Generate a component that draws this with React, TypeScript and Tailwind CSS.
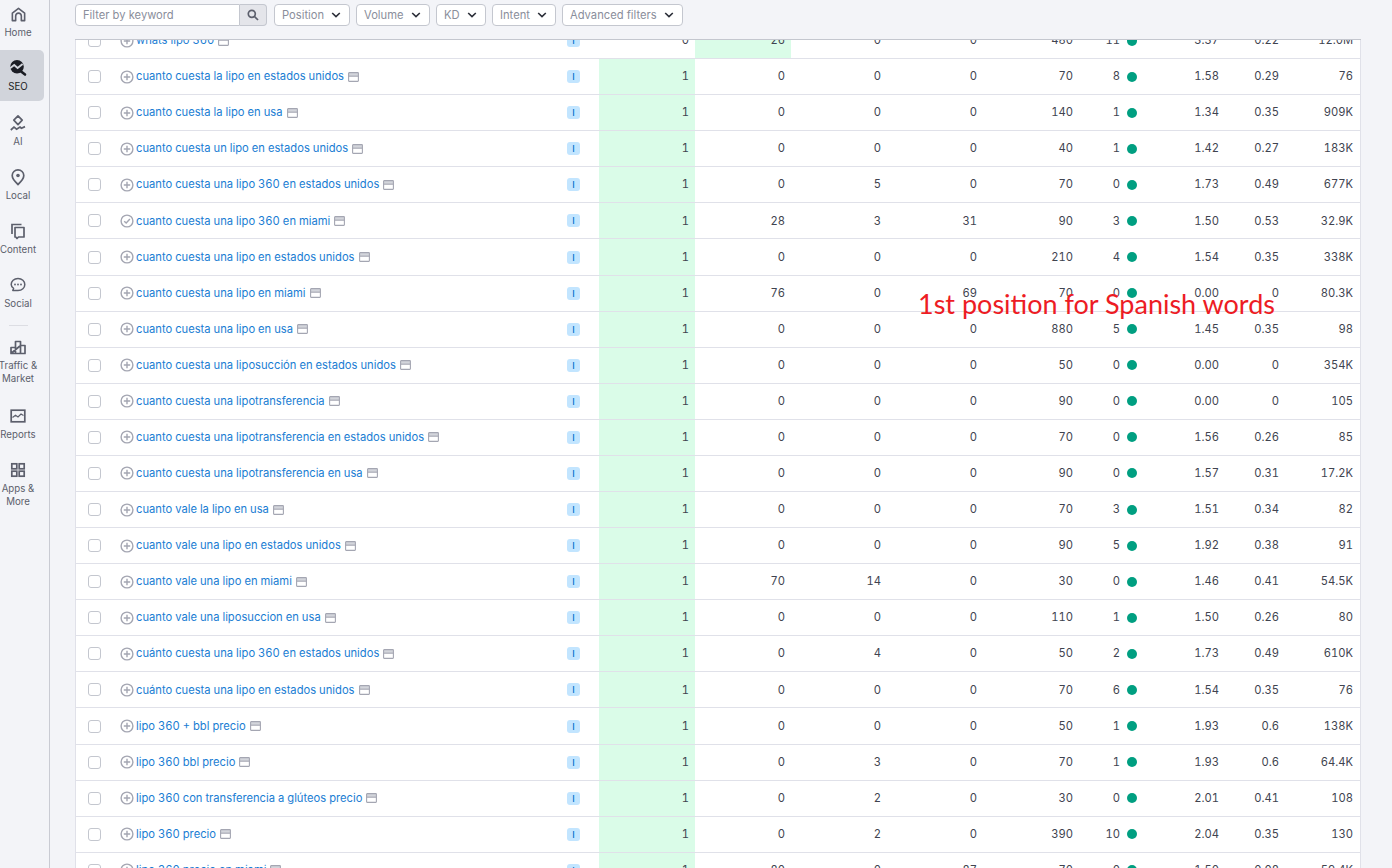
import React from "react";

type Row = [string, string, string, string, string, string, string, string, string, string, string?];
const rows: Row[] = [
  ["whats lipo 360", "0", "26", "0", "0", "480", "11", "3.37", "0.22", "12.0M"],
  ["cuanto cuesta la lipo en estados unidos", "1", "0", "0", "0", "70", "8", "1.58", "0.29", "76"],
  ["cuanto cuesta la lipo en usa", "1", "0", "0", "0", "140", "1", "1.34", "0.35", "909K"],
  ["cuanto cuesta un lipo en estados unidos", "1", "0", "0", "0", "40", "1", "1.42", "0.27", "183K"],
  ["cuanto cuesta una lipo 360 en estados unidos", "1", "0", "5", "0", "70", "0", "1.73", "0.49", "677K"],
  ["cuanto cuesta una lipo 360 en miami", "1", "28", "3", "31", "90", "3", "1.50", "0.53", "32.9K", "check"],
  ["cuanto cuesta una lipo en estados unidos", "1", "0", "0", "0", "210", "4", "1.54", "0.35", "338K"],
  ["cuanto cuesta una lipo en miami", "1", "76", "0", "69", "70", "0", "0.00", "0", "80.3K"],
  ["cuanto cuesta una lipo en usa", "1", "0", "0", "0", "880", "5", "1.45", "0.35", "98"],
  ["cuanto cuesta una liposucción en estados unidos", "1", "0", "0", "0", "50", "0", "0.00", "0", "354K"],
  ["cuanto cuesta una lipotransferencia", "1", "0", "0", "0", "90", "0", "0.00", "0", "105"],
  ["cuanto cuesta una lipotransferencia en estados unidos", "1", "0", "0", "0", "70", "0", "1.56", "0.26", "85"],
  ["cuanto cuesta una lipotransferencia en usa", "1", "0", "0", "0", "90", "0", "1.57", "0.31", "17.2K"],
  ["cuanto vale la lipo en usa", "1", "0", "0", "0", "70", "3", "1.51", "0.34", "82"],
  ["cuanto vale una lipo en estados unidos", "1", "0", "0", "0", "90", "5", "1.92", "0.38", "91"],
  ["cuanto vale una lipo en miami", "1", "70", "14", "0", "30", "0", "1.46", "0.41", "54.5K"],
  ["cuanto vale una liposuccion en usa", "1", "0", "0", "0", "110", "1", "1.50", "0.26", "80"],
  ["cuánto cuesta una lipo 360 en estados unidos", "1", "0", "4", "0", "50", "2", "1.73", "0.49", "610K"],
  ["cuánto cuesta una lipo en estados unidos", "1", "0", "0", "0", "70", "6", "1.54", "0.35", "76"],
  ["lipo 360 + bbl precio", "1", "0", "0", "0", "50", "1", "1.93", "0.6", "138K"],
  ["lipo 360 bbl precio", "1", "0", "3", "0", "70", "1", "1.93", "0.6", "64.4K"],
  ["lipo 360 con transferencia a glúteos precio", "1", "0", "2", "0", "30", "0", "2.01", "0.41", "108"],
  ["lipo 360 precio", "1", "0", "2", "0", "390", "10", "2.04", "0.35", "130"],
  ["lipo 360 precio en miami", "1", "80", "0", "87", "70", "0", "1.50", "0.08", "59.4K"],
];

function KeywordIcon({ check }: { check: boolean }) {
  return (
    <svg width="14" height="14" viewBox="0 0 14 14" fill="none" stroke="#a4a6b2" strokeWidth="1.4" className="shrink-0">
      <circle cx="7" cy="7" r="5.9" />
      {check ? <path d="M4.2 7.2 6.2 9.1 9.9 5.1" /> : <path d="M7 3.8v6.4M3.8 7h6.4" />}
    </svg>
  );
}

function SerpIcon() {
  return (
    <svg width="11" height="10" viewBox="0 0 11 10" fill="none" stroke="#a4a6b2" strokeWidth="1.1" className="shrink-0">
      <rect x="1" y="1" width="9" height="3" fill="#d3d5db" stroke="none" />
      <rect x="0.6" y="0.6" width="9.8" height="8.8" rx="0.6" />
      <path d="M0.6 4.200h9.800" />
    </svg>
  );
}

function Chevron() {
  return (
    <svg width="10" height="6" viewBox="0 0 10 6" fill="none" stroke="#2b2e38" strokeWidth="1.6" className="shrink-0">
      <path d="M1.2 1 5 4.6 8.8 1" />
    </svg>
  );
}

function FilterButton({ label, width }: { label: string; width: string }) {
  return (
    <div className={`flex h-[22px] items-center justify-between rounded-[4px] border border-[#c4c7cf] bg-white pl-[7px] pr-[8px] ${width}`}>
      <span className="text-[11.2px] text-[#8a8e9b]">{label}</span>
      <Chevron />
    </div>
  );
}

function NavItem({ label, icon, active, second }: { label: string; icon: React.ReactNode; active?: boolean; second?: string }) {
  return (
    <div className={`flex h-[51px] w-[44px] shrink-0 flex-col items-center rounded-r-[5px] pr-[8px] pt-[8px] ${active ? "bg-[#d1d4db]" : ""}`}>
      <div className="flex h-[20px] w-[20px] shrink-0 items-center justify-center">{icon}</div>
      <div className={`mt-[2px] whitespace-nowrap text-center text-[9.7px] leading-[13px] ${active ? "text-[#1b1d24]" : "text-[#5c5f6c]"}`}>
        {label}
        {second ? <br /> : null}
        {second}
      </div>
    </div>
  );
}

const s = { fill: "none", stroke: "#5c5f6c", strokeWidth: 1.7 };

const icons = {
  home: (
    <svg width="17" height="17" viewBox="0 0 18 18" {...s}>
      <path d="M2.500 7.500 9 2.500l6.500 5V15.500H12V10.500a3 3 0 0 0-6 0v5H2.500z" strokeLinejoin="round" />
    </svg>
  ),
  seo: (
    <svg width="18" height="18" viewBox="0 0 18 18" fill="none">
      <circle cx="8" cy="7.800" r="6.800" fill="#1b1d24" />
      <path d="M1 9.200 5.200 6 8.600 9 13.600 5" stroke="#d1d4db" strokeWidth="1.900" />
      <path d="M11.500 12 16 15.500" stroke="#1b1d24" strokeWidth="2.600" strokeLinecap="round" />
    </svg>
  ),
  ai: (
    <svg width="18" height="18" viewBox="0 0 18 18" {...s}>
      <path d="M9 1.800 13.200 6.200 9 10.600 4.800 6.200z" strokeLinejoin="round" />
      <path d="M1.800 16 5 13.200l2.600 2L11 13l1.400 1.200 3.600-1.600" />
    </svg>
  ),
  local: (
    <svg width="18" height="18" viewBox="0 0 18 18" {...s}>
      <path d="M9 16.500C6 13.800 3.200 11 3.200 7.600a5.800 5.800 0 0 1 11.600 0C14.800 11 12 13.800 9 16.500z" strokeLinejoin="round" />
      <circle cx="9" cy="7.500" r="1.800" fill="#5c5f6c" stroke="none" />
    </svg>
  ),
  content: (
    <svg width="18" height="18" viewBox="0 0 18 18" {...s}>
      <path d="M3 12V2.500h9.500" />
      <path d="M6 5.500h9v9.500H9.500L8 16.500 6.800 15H6z" strokeLinejoin="round" />
    </svg>
  ),
  social: (
    <svg width="18" height="18" viewBox="0 0 18 18" fill="none">
      <path d="M9 2.500c4 0 6.800 2.600 6.800 6s-2.800 6-6.800 6H3.800l.8-2.200C3 11.200 2.200 9.900 2.200 8.500c0-3.400 2.800-6 6.800-6z" stroke="#5c5f6c" strokeWidth="1.500" strokeLinejoin="round" />
      <circle cx="6" cy="8.500" r="0.900" fill="#5c5f6c" />
      <circle cx="9" cy="8.500" r="0.900" fill="#5c5f6c" />
      <circle cx="12" cy="8.500" r="0.900" fill="#5c5f6c" />
    </svg>
  ),
  traffic: (
    <svg width="18" height="18" viewBox="0 0 18 18" {...s}>
      <path d="M2 15.500V9.500h4.500M6.500 15.500V3.500h5v12M11.500 7.500H16v8H2z" strokeLinejoin="round" />
    </svg>
  ),
  reports: (
    <svg width="18" height="18" viewBox="0 0 18 18" {...s}>
      <rect x="2.200" y="3.200" width="13.600" height="11.600" />
      <path d="M3.500 10.500 6.500 8.200 9 10l3-3 2.500 1.500" strokeWidth="1.200" />
    </svg>
  ),
  apps: (
    <svg width="18" height="18" viewBox="0 0 18 18" {...s}>
      <rect x="2.800" y="2.800" width="5" height="5" />
      <rect x="10.200" y="2.800" width="5" height="5" />
      <rect x="2.800" y="10.200" width="5" height="5" />
      <rect x="10.200" y="10.200" width="5" height="5" />
    </svg>
  ),
};

function Num({ v, green }: { v: string; green?: boolean }) {
  return <div className={`flex h-full w-[96px] shrink-0 items-center justify-end pr-[6px] ${green ? "bg-[#dafce8]" : ""}`}>{v}</div>;
}

function TableRow({ row }: { row: Row }) {
  const [kw, pos, a, b, c, vol, kd, cpc, com, res, mark] = row;
  return (
    <div className="flex h-[36.09px] shrink-0 items-center border-b border-[#e0e1e9] bg-white text-[11.2px] tabular-nums text-[#40434f]">
      <div className="flex w-[44px] shrink-0 pl-[12px]">
        <div className="h-[13px] w-[13px] rounded-[3px] border border-[#c4c7cf] bg-white" />
      </div>
      <div className="flex w-[447px] shrink-0 items-center">
        <KeywordIcon check={mark === "check"} />
        <span className="ml-[2px] whitespace-nowrap text-[#1a7dd3]">{kw}</span>
        <span className="ml-[4px]">
          <SerpIcon />
        </span>
      </div>
      <div className="flex w-[32px] shrink-0 justify-start">
        <div className="flex h-[13px] w-[13px] items-center justify-center rounded-[3px] bg-[#c2e5ff] text-[9px] font-medium leading-none text-[#006dca]">I</div>
      </div>
      <Num v={pos} green={pos === "1"} />
      <Num v={a} green={pos === "0"} />
      <Num v={b} />
      <Num v={c} />
      <Num v={vol} />
      <div className="flex w-[60px] shrink-0 items-center justify-end pr-[2px]">
        <span>{kd}</span>
        <span className="ml-[7px] h-[10px] w-[10px] rounded-full bg-[#009f81]" />
      </div>
      <div className="w-[86px] shrink-0 pr-[6px] text-right">{cpc}</div>
      <div className="w-[60px] shrink-0 pr-[6px] text-right">{com}</div>
      <div className="flex-1 pr-[7px] text-right">{res}</div>
    </div>
  );
}

export default function App() {
  return (
    <div className="relative flex h-[868px] w-[1392px] overflow-hidden bg-[#f3f4f8] font-['Inter',sans-serif]">
      <nav className="flex h-full w-[50px] shrink-0 flex-col gap-[3.25px] border-r border-[#c9cbd3] pt-0 [&>*:first-child]:-mt-[4px]">
        <NavItem label="Home" icon={icons.home} />
        <NavItem label="SEO" icon={icons.seo} active />
        <NavItem label="AI" icon={icons.ai} />
        <NavItem label="Local" icon={icons.local} />
        <NavItem label="Content" icon={icons.content} />
        <NavItem label="Social" icon={icons.social} />
        <div className="ml-[9px] mt-[3.5px] h-px w-[19px] shrink-0 bg-[#dcdde3]" />
        <div className="h-[65.5px] shrink-0">
          <NavItem label="Traffic &" second="Market" icon={icons.traffic} />
        </div>
        <NavItem label="Reports" icon={icons.reports} />
        <NavItem label="Apps &" second="More" icon={icons.apps} />
      </nav>
      <main className="flex h-full w-[1311px] shrink-0 flex-col pl-[25px]">
        <div className="flex h-[40px] shrink-0 items-start gap-[6px] border-b border-[#c4c7cf] pt-[4px]">
          <div className="mr-[1px] flex h-[22px]">
            <div className="flex h-full w-[165px] items-center rounded-l-[4px] border border-[#c4c7cf] bg-white pl-[7px] text-[11.2px] text-[#8a8e9b]">Filter by keyword</div>
            <div className="flex h-full w-[27px] items-center justify-center rounded-r-[4px] border border-l-0 border-[#c4c7cf] bg-[#e4e5ea]">
              <svg width="12" height="12" viewBox="0 0 12 12" fill="none" stroke="#5c5f6c" strokeWidth="1.700">
                <circle cx="4.800" cy="4.800" r="3.500" />
                <path d="M7.500 7.500 11 11" />
              </svg>
            </div>
          </div>
          <FilterButton label="Position" width="w-[76px]" />
          <FilterButton label="Volume" width="w-[74px]" />
          <FilterButton label="KD" width="w-[50px]" />
          <FilterButton label="Intent" width="w-[64px]" />
          <FilterButton label="Advanced filters" width="w-[121px]" />
        </div>
        <div className="min-h-0 flex-1 overflow-hidden border-x border-[#e0e1e9]">
          <div className="-mt-[17px] flex flex-col">
            {rows.map((r) => (
              <TableRow key={r[0]} row={r} />
            ))}
          </div>
        </div>
      </main>
      <div className="absolute left-[918px] top-[288px] whitespace-nowrap font-['Lato',sans-serif] text-[27px] leading-[32px] text-[#ed1c24]">1st position for Spanish words</div>
    </div>
  );
}
